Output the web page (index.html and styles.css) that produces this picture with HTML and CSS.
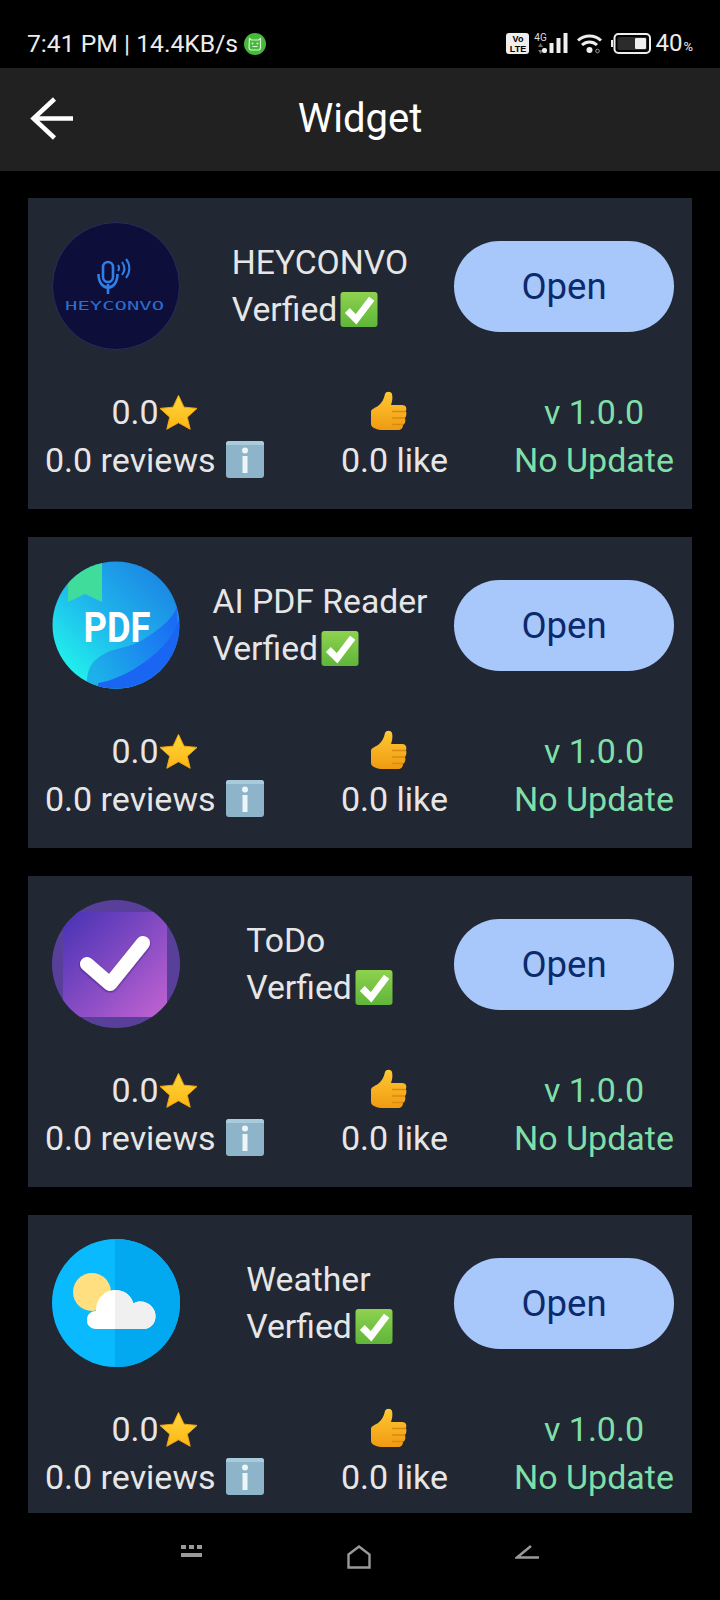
FILE: index.html
```html
<!DOCTYPE html>
<html lang="en">
<head>
<meta charset="utf-8">
<title>Widget</title>
<link rel="stylesheet" href="styles.css">
</head>
<body>
<svg class="defs" width="0" height="0" aria-hidden="true">
  <defs>
    <linearGradient id="checkBg" x1="0" y1="0" x2="0" y2="1"><stop offset="0" stop-color="#8ed24f"/><stop offset="1" stop-color="#5fb53a"/></linearGradient>
    <linearGradient id="starFill" x1="0" y1="0" x2="0" y2="1"><stop offset="0" stop-color="#ffd83b"/><stop offset="1" stop-color="#fdb515"/></linearGradient>
    <linearGradient id="thumbFill" x1="0" y1="0" x2="0" y2="1"><stop offset="0" stop-color="#ffc933"/><stop offset="1" stop-color="#f09a12"/></linearGradient>
    <symbol id="e-check" viewBox="0 0 40 38">
      <rect x="1" y="1" width="38" height="36" rx="3" fill="url(#checkBg)"/>
      <path d="M8 20l9 9L33 8" fill="none" stroke="#fff" stroke-width="7"/>
    </symbol>
    <symbol id="e-star" viewBox="0 0 40 36">
      <path d="M20 1l5.600 12 13.400 1.300-10 9 3 12.400L20 29l-12 6.700 3-12.400-10-9L14.400 13z" fill="url(#starFill)" stroke="#f7a70f" stroke-width="1" stroke-linejoin="round"/>
    </symbol>
    <symbol id="e-info" viewBox="0 0 38 37">
      <rect width="38" height="37" rx="3" fill="#8db4c9"/>
      <path d="M0 3a3 3 0 0 1 3-3h32a3 3 0 0 1 3 3v1H0z" fill="#a9cbdc"/>
      <circle cx="19" cy="9.500" r="3" fill="#eef5f8"/>
      <rect x="16.500" y="15" width="5" height="17" fill="#eef5f8"/>
    </symbol>
    <symbol id="e-thumb" viewBox="0 0 38 39">
      <path d="M2 21C2 18 6 17 9 15C13 12 15 8 16 3C17 0 22 0 23 3C24 7 23 11 22 14H33C37 14 38 17 37 20C38 23 37 26 36 27C37 30 36 33 34 34C34 37 32 39 29 39H14C9 39 2 37 2 33Z" fill="url(#thumbFill)"/>
      <path d="M23 20.500H37M23 27H36M23 33.500H34" stroke="#d98a10" stroke-width="1.500" fill="none"/>
    </symbol>
  </defs>
</svg>
<div class="app">
  <header class="status">
    <div class="status-left">
      <span class="status-text">7:41 PM | 14.4KB/s</span>
      <svg class="bot" width="22" height="22" viewBox="0 0 22 22">
        <circle cx="11" cy="11" r="11" fill="#46b83c"/>
        <path d="M5.500 5.500l2 1.500h7l2-1.500v9a2.500 2.500 0 0 1-2.500 2.500h-6.500a2.500 2.500 0 0 1-2.500-2.500z" fill="none" stroke="#d8f3d2" stroke-width="1.200"/>
        <circle cx="8.500" cy="10.500" r="1" fill="#d8f3d2"/><circle cx="13.500" cy="10.500" r="1" fill="#d8f3d2"/>
        <path d="M8.500 13.500h5" stroke="#d8f3d2" stroke-width="1.100"/>
      </svg>
    </div>
    <div class="status-right">
      <span class="volte">Vo<br>LTE</span>
      <span class="net"><span class="net-label">4G</span><svg width="7" height="11" viewBox="0 0 7 11"><path d="M3.500 0l2.500 4H1zM3.500 11L1 7h5z" fill="#6c6c6c"/></svg></span>
      <svg class="signal" width="26" height="21" viewBox="0 0 26 21">
        <rect x="0" y="15" width="5" height="5" rx="2" fill="#eee"/>
        <rect x="7.500" y="10" width="4" height="10" fill="#eee"/>
        <rect x="14.500" y="5" width="4" height="15" fill="#eee"/>
        <rect x="21.500" y="0" width="4" height="20" fill="#eee"/>
      </svg>
      <svg class="wifi" width="25" height="21" viewBox="0 0 25 21">
        <path d="M1 7.500c6.500-6 16.500-6 23 0M5 12c4.500-4 10.500-4 15 0" fill="none" stroke="#eee" stroke-width="3"/>
        <circle cx="12.500" cy="17" r="3" fill="#eee"/>
        <circle cx="20.500" cy="18" r="1.800" fill="none" stroke="#999" stroke-width="1"/>
      </svg>
      <svg class="battery" width="40" height="21" viewBox="0 0 40 21">
        <rect x="0" y="7" width="2" height="7" fill="#eee"/>
        <rect x="3.500" y="1" width="35.500" height="19" rx="4" fill="none" stroke="#eee" stroke-width="2"/>
        <rect x="6.500" y="4" width="29.500" height="13" rx="2" fill="#2b2b2b"/>
        <rect x="24" y="5" width="11" height="11" rx="1" fill="#eee"/>
      </svg>
      <span class="batt-text">40<small class="pct">%</small></span>
    </div>
  </header>

  <nav class="appbar">
    <svg class="back" width="44" height="44" viewBox="0 0 44 44">
      <path d="M43 21.500H4M24.500 2L3.500 21.500 24.500 41" fill="none" stroke="#fff" stroke-width="4.500"/>
    </svg>
    <h1 class="appbar-title">Widget</h1>
  </nav>

  <main class="list">
    <article class="card">
      <div class="card-top">
        <svg class="avatar" viewBox="0 0 128 128">
          <circle cx="64" cy="64" r="63.500" fill="#0d0e3a" stroke="#2b2c5c"/>
          <rect x="51" y="40" width="10" height="20" rx="5" fill="none" stroke="#2f7fe6" stroke-width="2.600"/>
          <path d="M46.500 52c0 18 19 18 19 0M56 62v10" fill="none" stroke="#2f7fe6" stroke-width="2.600"/>
          <path d="M66 43c1.500 2 1.500 4 0 6M70 40c3 4 3 9 0 13M74 37c4.500 5.500 4.500 13 0 19" fill="none" stroke="#2f7fe6" stroke-width="2"/>
          <text class="hc-logo" x="13" y="88" textLength="99" lengthAdjust="spacingAndGlyphs">HEYCONVO</text>
        </svg>
        <div class="name-wrap"><div class="name"><div>HEYCONVO</div><div class="verified">Verfied<svg class="emoji emoji-check" width="40" height="37"><use href="#e-check"/></svg></div></div></div>
        <button class="open">Open</button>
      </div>
      <div class="stats">
        <div class="stat stat-rate"><div>0.0<svg class="emoji" width="39" height="36"><use href="#e-star"/></svg></div><div>0.0 reviews <svg class="emoji emoji-info" width="38" height="37"><use href="#e-info"/></svg></div></div>
        <div class="stat stat-like"><div><svg class="emoji emoji-thumb" width="38" height="39"><use href="#e-thumb"/></svg></div><div>0.0 like</div></div>
        <div class="stat stat-ver"><div>v 1.0.0</div><div>No Update</div></div>
      </div>
    </article>

    <article class="card">
      <div class="card-top">
        <svg class="avatar" viewBox="0 0 128 128">
          <defs>
            <clipPath id="pdfClip"><circle cx="64" cy="64" r="63.500"/></clipPath>
            <linearGradient id="pdfBg" x1="0.850" y1="0.100" x2="0.100" y2="0.850"><stop offset="0" stop-color="#1b87e4"/><stop offset="0.500" stop-color="#1fb3ec"/><stop offset="1" stop-color="#21f2ec"/></linearGradient>
            <linearGradient id="pdfFold" x1="0.100" y1="0.800" x2="1" y2="0.300"><stop offset="0" stop-color="#1cb0e8"/><stop offset="1" stop-color="#1a6cf4"/></linearGradient>
          </defs>
          <g clip-path="url(#pdfClip)">
            <rect width="128" height="128" fill="url(#pdfBg)"/>
            <path d="M35 118C37 104 41 98 58 90C72 86 84 84 92 78C104 70 118 62 125 46L128 128H35Z" fill="url(#pdfFold)"/>
            <path d="M46 122C60 120 78 112 94 100C108 90 122 76 127 58V128H46Z" fill="#1a66f3"/>
            <path d="M16 0h34v41L33 33 16 41z" fill="#3fdc9c"/>
          </g>
          <text class="pdf-logo" x="31.500" y="81" textLength="67" lengthAdjust="spacingAndGlyphs">PDF</text>
        </svg>
        <div class="name-wrap"><div class="name"><div>AI PDF Reader</div><div class="verified">Verfied<svg class="emoji emoji-check" width="40" height="37"><use href="#e-check"/></svg></div></div></div>
        <button class="open">Open</button>
      </div>
      <div class="stats">
        <div class="stat stat-rate"><div>0.0<svg class="emoji" width="39" height="36"><use href="#e-star"/></svg></div><div>0.0 reviews <svg class="emoji emoji-info" width="38" height="37"><use href="#e-info"/></svg></div></div>
        <div class="stat stat-like"><div><svg class="emoji emoji-thumb" width="38" height="39"><use href="#e-thumb"/></svg></div><div>0.0 like</div></div>
        <div class="stat stat-ver"><div>v 1.0.0</div><div>No Update</div></div>
      </div>
    </article>

    <article class="card">
      <div class="card-top">
        <svg class="avatar" viewBox="0 0 128 128">
          <defs>
            <clipPath id="todoClip"><circle cx="64" cy="64" r="64"/></clipPath>
            <linearGradient id="todoBg" x1="0" y1="0" x2="1" y2="1"><stop offset="0" stop-color="#4632b4"/><stop offset="1" stop-color="#c263d2"/></linearGradient>
            <filter id="todoShadow" x="-20%" y="-20%" width="140%" height="140%"><feDropShadow dx="0" dy="1" stdDeviation="1" flood-color="#2a1560" flood-opacity="0.700"/></filter>
          </defs>
          <circle cx="64" cy="64" r="64" fill="#58409a"/>
          <g clip-path="url(#todoClip)"><rect x="11" y="12" width="104" height="105" rx="9" fill="url(#todoBg)"/></g>
          <path d="M35 64l23 20 33-41" fill="none" stroke="#fff" stroke-width="14" stroke-linecap="round" stroke-linejoin="round" filter="url(#todoShadow)"/>
        </svg>
        <div class="name-wrap"><div class="name"><div>ToDo</div><div class="verified">Verfied<svg class="emoji emoji-check" width="40" height="37"><use href="#e-check"/></svg></div></div></div>
        <button class="open">Open</button>
      </div>
      <div class="stats">
        <div class="stat stat-rate"><div>0.0<svg class="emoji" width="39" height="36"><use href="#e-star"/></svg></div><div>0.0 reviews <svg class="emoji emoji-info" width="38" height="37"><use href="#e-info"/></svg></div></div>
        <div class="stat stat-like"><div><svg class="emoji emoji-thumb" width="38" height="39"><use href="#e-thumb"/></svg></div><div>0.0 like</div></div>
        <div class="stat stat-ver"><div>v 1.0.0</div><div>No Update</div></div>
      </div>
    </article>

    <article class="card">
      <div class="card-top">
        <svg class="avatar" viewBox="0 0 128 128">
          <defs>
            <clipPath id="wxClip"><circle cx="64" cy="64" r="64"/></clipPath>
            <clipPath id="cloudRight"><rect x="63" y="0" width="65" height="128"/></clipPath>
          </defs>
          <g clip-path="url(#wxClip)">
            <rect width="128" height="128" fill="#0abaff"/>
            <rect x="63" width="65" height="128" fill="#03a9f0"/>
          </g>
          <circle cx="40" cy="53" r="19" fill="#ffdf80"/>
          <path d="M43 90a8.500 8.500 0 0 1-8-10c.5-5 4-8 9-8 0-12 8-21 19-21 9 0 16 5 18.500 13.500 2-1.500 4.500-2 7-2 8 0 15 6.500 15 14.500 0 7.500-5 13-12 13z" fill="#fff"/>
          <path d="M43 90a8.500 8.500 0 0 1-8-10c.5-5 4-8 9-8 0-12 8-21 19-21 9 0 16 5 18.500 13.500 2-1.500 4.500-2 7-2 8 0 15 6.500 15 14.500 0 7.500-5 13-12 13z" fill="#f0f0f0" clip-path="url(#cloudRight)"/>
        </svg>
        <div class="name-wrap"><div class="name"><div>Weather</div><div class="verified">Verfied<svg class="emoji emoji-check" width="40" height="37"><use href="#e-check"/></svg></div></div></div>
        <button class="open">Open</button>
      </div>
      <div class="stats">
        <div class="stat stat-rate"><div>0.0<svg class="emoji" width="39" height="36"><use href="#e-star"/></svg></div><div>0.0 reviews <svg class="emoji emoji-info" width="38" height="37"><use href="#e-info"/></svg></div></div>
        <div class="stat stat-like"><div><svg class="emoji emoji-thumb" width="38" height="39"><use href="#e-thumb"/></svg></div><div>0.0 like</div></div>
        <div class="stat stat-ver"><div>v 1.0.0</div><div>No Update</div></div>
      </div>
    </article>
  </main>

  <footer class="sysnav">
    <svg width="21" height="13" viewBox="0 0 21 13"><path d="M0 0h5v4H0zM8 0h5v4H8zM16 0h5v4h-5zM0 8h21v4H0z" fill="#9a9a9a"/></svg>
    <svg width="24" height="24" viewBox="0 0 24 24"><path d="M1.500 9.500L12 1.500l10.500 8v13h-21z" fill="none" stroke="#9a9a9a" stroke-width="2.400"/></svg>
    <svg width="24" height="15" viewBox="0 0 24 15"><path d="M16 1L2 12.500h22" fill="none" stroke="#9a9a9a" stroke-width="2.400"/></svg>
  </footer>
</div>
</body>
</html>
```
FILE: styles.css
```css
* { box-sizing: border-box; }
html, body { margin: 0; padding: 0; background: #000; }
body { font-family: Roboto, "Liberation Sans", sans-serif; }
.defs { position: absolute; }
.app { width: 720px; height: 1600px; display: flex; flex-direction: column; overflow: hidden; background: #000; }

.status { height: 68px; flex: none; display: flex; justify-content: space-between; align-items: center; padding: 19px 27px 0 27px; color: #ececec; }
.status-left { display: flex; align-items: center; gap: 6px; }
.status-text { font-size: 24.7px; line-height: 28px; white-space: nowrap; }
.bot { display: block; }
.status-right { display: flex; align-items: center; }
.volte { width: 23px; height: 21px; background: #eee; color: #000; border-radius: 3px; font: 700 9px/10px "Liberation Sans", sans-serif; text-align: center; padding-top: 0.5px; }
.net { display: flex; flex-direction: column; align-items: center; width: 14px; margin-left: 4px; }
.net-label { font-size: 10px; line-height: 10px; color: #ddd; white-space: nowrap; }
.signal { margin-left: -5px; }
.wifi { margin-left: 9px; }
.battery { margin-left: 9px; }
.batt-text { font-size: 24px; line-height: 28px; margin: 3px 0 0 4px; white-space: nowrap; }
.pct { font-size: 13px; margin-left: 1px; }

.appbar { height: 103px; flex: none; background: #212121; display: flex; align-items: center; justify-content: center; padding-bottom: 2px; position: relative; }
.back { position: absolute; left: 30px; top: 29px; }
.appbar-title { margin: 0; font-size: 40px; font-weight: 400; color: #fff; }

.list { flex: 1; min-height: 0; overflow: hidden; display: flex; flex-direction: column; gap: 28px; padding: 27px 28px 0; }
.card { flex: none; height: 311px; background: #212733; padding: 24px 18px 0; display: flex; flex-direction: column; color: #e6e6e6; font-size: 33.7px; line-height: 47px; }
.card-top { display: flex; align-items: center; height: 128px; padding-left: 5.5px; }
.avatar { width: 128px; height: 128px; flex: none; display: block; }
.name-wrap { flex: 1; display: flex; justify-content: center; padding-left: 6.5px; }
.name { white-space: nowrap; }
.verified { display: flex; align-items: center; }
.open { width: 220px; height: 91px; flex: none; border: 0; border-radius: 46px; background: #a8c7fa; color: #0b2a6b; font: 400 36.5px Roboto, sans-serif; padding: 0; }
.emoji { display: inline-block; vertical-align: -6px; flex: none; }
.emoji-check { margin-left: 2px; }
.emoji-info { margin-left: 2px; }
.emoji-thumb { margin-right: 12px; }
.hc-logo { font: 400 12px "DejaVu Sans Mono", monospace; fill: #2a6fd0; }
.pdf-logo { font: 700 43px Roboto, sans-serif; fill: #fff; }

.stats { display: flex; margin-top: 38px; line-height: 48px; font-size: 34px; }
.stat { text-align: center; white-space: nowrap; }
.stat-rate { margin-left: -1px; }
.stat-like { margin-left: 77px; }
.stat-ver { margin-left: auto; color: #7fdfa8; }

.sysnav { height: 87px; flex: none; background: #000; display: flex; justify-content: space-between; align-items: flex-start; padding: 32px 181px 0; }
```
